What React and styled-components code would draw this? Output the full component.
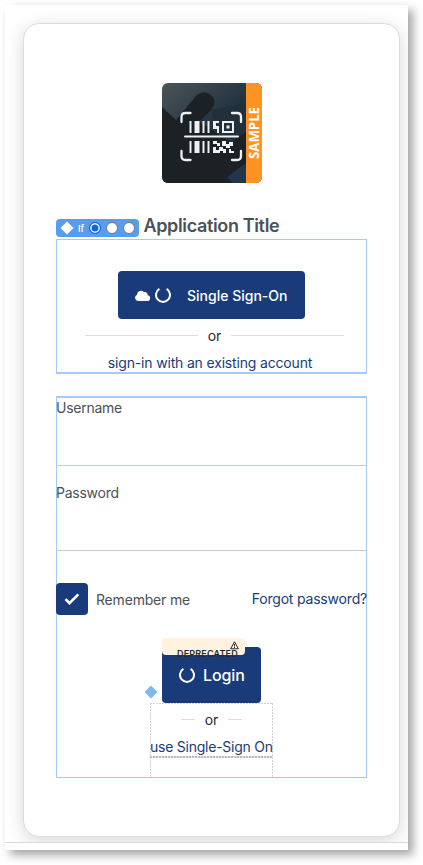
import React from "react";
import styled, { createGlobalStyle } from "styled-components";

const navy = "#193b79";
const outline = "#a6caf5";

const GlobalStyle = createGlobalStyle`
  * { box-sizing: border-box; }
  html, body { margin: 0; background: #fff; overflow: hidden; }
  body { font-family: Inter, "Liberation Sans", sans-serif; font-size: 14px; color: #272b30; }
`;

const Page = styled.div`
  width: 423px;
  height: 865px;
  padding: 5px;
  overflow: hidden;
`;

const Sheet = styled.div`
  width: 403px;
  height: 845px;
  background: #fff;
  box-shadow: 5px 5px 9px rgba(0, 0, 0, 0.36);
`;

const Canvas = styled.div`
  height: 838px;
  padding: 18px 0 0 18px;
  border-bottom: 1px solid #d8d8d8;
  overflow: hidden;
`;

const Card = styled.main`
  width: 377px;
  height: 814px;
  padding: 59px 32px 0;
  display: flex;
  flex-direction: column;
  background: #fff;
  border: 1px solid #dcdcdc;
  border-radius: 16px;
  box-shadow: 0 4px 18px rgba(0, 0, 0, 0.16);
`;

const Logo = styled.svg`
  display: block;
  width: 100px;
  height: 100px;
  align-self: center;
  flex-shrink: 0;
`;

const TitleRow = styled.div`
  height: 23px;
  margin-top: 33px;
  display: flex;
  align-items: flex-start;
  flex-shrink: 0;
`;

const Condition = styled.div`
  width: 83px;
  height: 18px;
  margin-top: 3px;
  padding: 0 4px;
  display: flex;
  align-items: center;
  flex-shrink: 0;
  border-radius: 4px;
  background: #589cf0;
  color: #fff;
  font-size: 9.5px;
  font-weight: 500;
`;

const Diamond = styled.svg`
  display: block;
  width: 14px;
  height: 14px;
  margin-right: 4px;
  flex-shrink: 0;
`;

const Choice = styled.span`
  width: 12px;
  height: 12px;
  margin-left: 5px;
  flex-shrink: 0;
  border-radius: 50%;
  border: 1px solid ${(p) => (p.$on ? "#0866ed" : "#777")};
  background: ${(p) => (p.$on ? "#0866ed" : "#fff")};
  box-shadow: ${(p) => (p.$on ? "inset 0 0 0 1.5px #fff" : "none")};
`;

const ConditionName = styled.span`
  width: 7px;
  margin-right: -1px;
`;

const Title = styled.h1`
  margin: 0 0 0 4.5px;
  font-size: 18px;
  line-height: 20px;
  font-weight: 600;
  letter-spacing: -0.36px;
  color: #4b5157;
  white-space: nowrap;
`;

const SignOnPanel = styled.section`
  height: 135px;
  padding-top: 31px;
  display: flex;
  flex-direction: column;
  align-items: center;
  border: 1px solid ${outline};
  border-bottom-width: 2px;
  flex-shrink: 0;
`;

const Button = styled.button`
  display: flex;
  align-items: center;
  flex-shrink: 0;
  width: ${(p) => p.$width}px;
  height: ${(p) => p.$height}px;
  padding: 0 17px;
  border: 0;
  border-radius: 4px;
  background: ${navy};
  color: #fff;
  font-family: inherit;
  font-size: ${(p) => p.$size}px;
  font-weight: 550;
  letter-spacing: ${(p) => p.$tracking}px;
  white-space: nowrap;
`;

const Cloud = styled.svg`
  width: 15px;
  height: 11px;
  margin-right: 5px;
`;

const SpinnerIcon = styled.svg`
  width: 16px;
  height: 16px;
  margin-right: ${(p) => p.$gap}px;
  flex-shrink: 0;
`;

const Divider = styled.div`
  width: ${(p) => p.$width}px;
  height: 20px;
  margin-top: ${(p) => p.$top}px;
  margin-left: ${(p) => p.$indent || 0}px;
  display: flex;
  align-items: center;
  justify-content: center;
  gap: ${(p) => p.$gap}px;
  line-height: 20px;
  flex-shrink: 0;

  &::before,
  &::after {
    content: "";
    flex: 1;
    height: 1px;
    margin-top: -2px;
    background: #dbdddf;
  }
`;

const Link = styled.a`
  display: block;
  color: ${navy};
  line-height: 20px;
  white-space: nowrap;
  letter-spacing: ${(p) => p.$tracking || 0}px;
  margin-top: ${(p) => p.$top || 0}px;
  margin-right: ${(p) => p.$end || 0}px;
`;

const LoginPanel = styled.section`
  height: 382px;
  margin-top: 22px;
  display: flex;
  flex-direction: column;
  border: 1px solid ${outline};
  border-top-width: 2px;
  flex-shrink: 0;
`;

const Field = styled.label`
  display: block;
  height: ${(p) => p.$height}px;
  padding-top: ${(p) => p.$top}px;
  margin: 0 0 0 -1px;
  border-bottom: 1px solid #c4cad5;
  color: #4b5157;
  line-height: 20px;
  letter-spacing: -0.25px;
  flex-shrink: 0;
`;

const OptionsRow = styled.div`
  display: flex;
  align-items: center;
  height: 32px;
  margin: 32px -1px 0;
  color: #4b5157;
  letter-spacing: -0.19px;
  white-space: nowrap;

  ${Link} { margin-left: auto; }
`;

const Checkbox = styled.span`
  width: 32px;
  height: 32px;
  margin-right: 8px;
  display: grid;
  place-items: center;
  background: ${navy};
  border-radius: 4px;
`;

const LoginButtonWrap = styled.div`
  position: relative;
  width: 99px;
  margin: 32px 0 0 105px;
`;

const Deprecated = styled.span`
  position: absolute;
  top: -9px;
  left: 0;
  width: 83px;
  height: 17px;
  border-radius: 4px;
  background: #fff2df;
  color: #272b30;
`;

const WarningIcon = styled.svg`
  position: absolute;
  top: 3px;
  right: 6px;
  width: 9px;
  height: 9px;
`;

const DeprecatedText = styled.span`
  position: absolute;
  top: 10px;
  left: 15px;
  font-size: 9px;
  line-height: 12px;
  font-weight: 600;
  letter-spacing: 0.18px;
`;

const Marker = styled(Diamond)`
  position: absolute;
  left: -18px;
  bottom: 4px;
  margin: 0;
`;

const Alternative = styled.div`
  width: 123px;
  height: 75px;
  margin-left: 93px;
  display: flex;
  flex-direction: column;
  align-items: center;
  --dash: repeating-linear-gradient(90deg, #d3d3d3 0 2px, transparent 2px 3px);
  --dash-down: repeating-linear-gradient(180deg, #d3d3d3 0 2px, transparent 2px 3px);
  background:
    var(--dash) 0 0 / 100% 1px no-repeat,
    var(--dash-down) 0 0 / 1px 100% no-repeat,
    var(--dash-down) 100% 0 / 1px 100% no-repeat;
  padding-top: 1px;
  flex-shrink: 0;

  ${Link} {
    width: 123px;
    height: 21px;
    padding-bottom: 2px;
    background: repeating-linear-gradient(90deg, #bdbdbd 0 2px, #e2e2e2 2px 3px) 0 100% / 100% 2px no-repeat;
  }
`;

const Spinner = ({ gap }) => (
  <SpinnerIcon $gap={gap} viewBox="0 0 16 16">
    <path d="M4.4 1.9A7 7 0 1 0 11.6 1.9" fill="none" stroke="#fff" strokeWidth="2" />
  </SpinnerIcon>
);

const AppLogo = () => (
  <Logo viewBox="0 0 100 100">
    <defs>
      <clipPath id="tile"><rect width="100" height="100" rx="6" /></clipPath>
      <linearGradient id="slate" x2=".8" y2="1">
        <stop stopColor="#4b5558" />
        <stop offset=".5" stopColor="#243341" />
        <stop offset="1" stopColor="#20374c" />
      </linearGradient>
    </defs>
    <g clipPath="url(#tile)">
      <path fill="url(#slate)" d="M0 0h100v100H0z" />
      <path d="M0 24L14 37 34 13Q42 6 49 12T49 27L37 39 69 59 84 48V80L65 94 71 100H0Z" fill="#1b2124" />
      <path d="M49 27L84 20V49L69 60 55 51Z" fill="#22303b" />
      <path d="M84 0h16v100H84z" fill="#ff9324" />
      <g fill="none" stroke="#edf1f3" strokeWidth="2.3" strokeLinecap="round">
        <path d="M19.5 39v-5q0-4 4-4h5M70 30h5q4 0 4 4v5M19.5 68v5q0 4 4 4h5M70 77h5q4 0 4-4v-5" />
        <path d="M23 53.5h53" strokeWidth="2" />
      </g>
      <g fill="#edf1f3">
        <path d="M27.5 38h2v12h-2zM32.5 38h5v12h-5zM40.5 38h2v12h-2zM45.5 38h2v12h-2zM27.5 58h2v12h-2zM32.5 58h5v12h-5zM40.5 58h2v12h-2zM45.5 58h2v12h-2z" />
        <path d="M51 38h6v2h-3v3h3v7h-2v-4h-4zM60 38h12v12H60zm2 2v8h8v-8zM64.5 42.5h3v3h-3z" fillRule="evenodd" />
        <path d="M51 58h4v2h3v3h-3v-2h-4zM60 58h4v3h3v-2h4v4h-3v2h-4v-2h-4zM51 64h3v3h4v3h-7zM57 64h4v2h3v4h-3v-2h-4zM67 66h2v2h3v2h-5z" />
      </g>
      <text transform="translate(97 76) rotate(-90)" fontFamily="Open Sans, sans-serif" fontSize="13.5" fontWeight="700" fill="#fff" textLength="52" lengthAdjust="spacingAndGlyphs">SAMPLE</text>
    </g>
  </Logo>
);

export default function App() {
  return (
    <Page>
      <GlobalStyle />
      <Sheet>
        <Canvas>
          <Card>
            <AppLogo />
            <TitleRow>
              <Condition>
                <Diamond viewBox="0 0 14 14"><path d="M7 .5 13.5 7 7 13.5.5 7Z" fill="#fff" /></Diamond>
                <ConditionName>If</ConditionName>
                <Choice $on />
                <Choice />
                <Choice />
              </Condition>
              <Title>Application Title</Title>
            </TitleRow>
            <SignOnPanel>
              <Button $width={187} $height={48} $size={14} $tracking={0}>
                <Cloud viewBox="0 0 15 11"><path d="M3.5 11A3.3 3.3 0 0 1 2 4.7 4 4 0 0 1 9 2.2a2.7 2.7 0 0 1 3.6 3A2.9 2.9 0 0 1 12 11Z" fill="#fff" /></Cloud>
                <Spinner gap={16} />
                Single Sign-On
              </Button>
              <Divider $width={259} $gap={10} $top={7} $indent={6}>or</Divider>
              <Link $top={7} $tracking={-0.17} $end={3}>sign-in with an existing account</Link>
            </SignOnPanel>
            <LoginPanel>
              <Field $height={68} $top={0}>Username</Field>
              <Field $height={85} $top={17}>Password</Field>
              <OptionsRow>
                <Checkbox>
                  <svg width="16" height="14" viewBox="0 0 16 14"><path d="M1.5 7.2 5.5 11.2 14.3 2.3" fill="none" stroke="#fff" strokeWidth="2.6" /></svg>
                </Checkbox>
                Remember me
                <Link $tracking={-0.19}>Forgot password?</Link>
              </OptionsRow>
              <LoginButtonWrap>
                <Button $width={99} $height={56} $size={16} $tracking={-0.1}>
                  <Spinner gap={8} />
                  Login
                </Button>
                <Deprecated>
                  <WarningIcon viewBox="0 0 9 9">
                    <path d="M4.5.8 8.4 7.8H.6Z" fill="none" stroke="#272b30" />
                    <path d="M4.5 3v2.3M4.5 6v1" stroke="#272b30" />
                  </WarningIcon>
                  <DeprecatedText>DEPRECATED</DeprecatedText>
                </Deprecated>
                <Marker viewBox="0 0 14 14"><path d="M7 .5 13.5 7 7 13.5.5 7Z" fill="#7fb7f2" /></Marker>
              </LoginButtonWrap>
              <Alternative>
                <Divider $width={61} $gap={10} $top={6}>or</Divider>
                <Link $top={7} $tracking={-0.24}>use Single-Sign On</Link>
              </Alternative>
            </LoginPanel>
          </Card>
        </Canvas>
      </Sheet>
    </Page>
  );
}
